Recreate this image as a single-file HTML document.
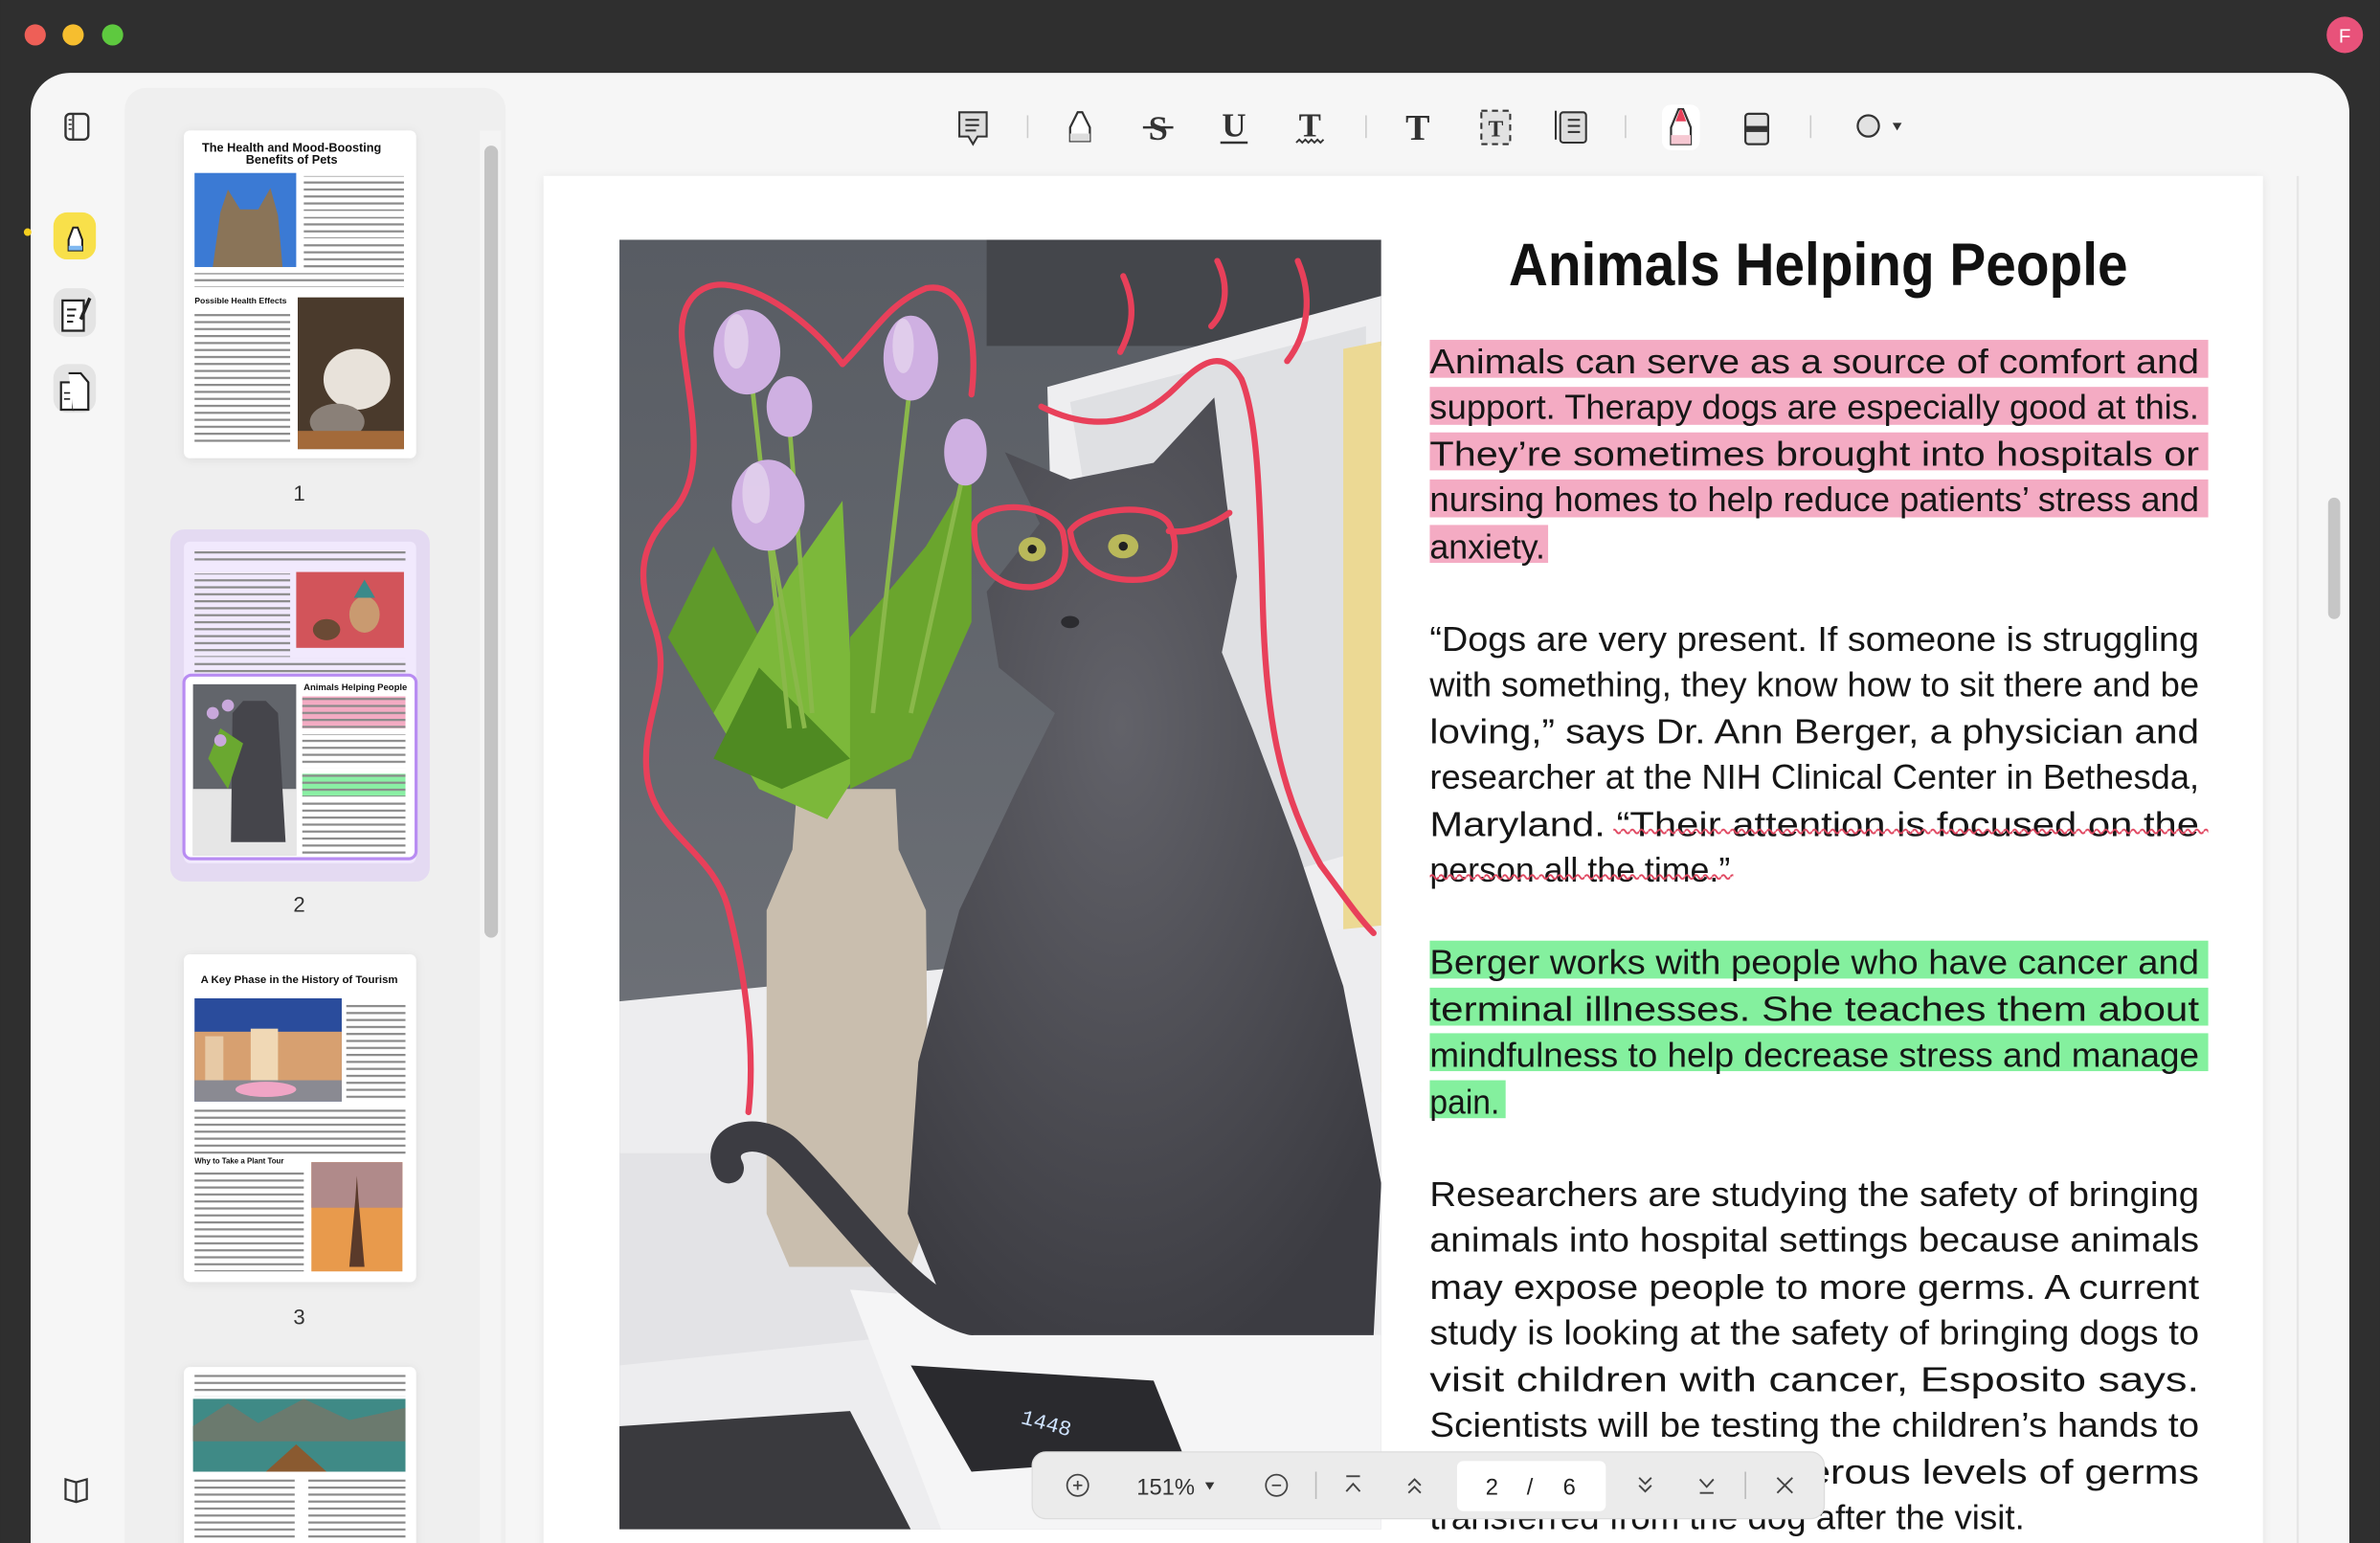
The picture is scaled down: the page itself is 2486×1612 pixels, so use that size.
<!DOCTYPE html>
<html><head><meta charset="utf-8"><style>
html,body{margin:0;padding:0;background:#2f2f2f;}
svg{display:block;font-family:"Liberation Sans",sans-serif;}
</style></head><body>
<svg width="2486" height="1612" viewBox="0 0 1568 1017" xmlns="http://www.w3.org/2000/svg">
<defs>
<pattern id="tl" width="10" height="4.6" patternUnits="userSpaceOnUse"><rect width="10" height="1.4" fill="#8a8a8a"/></pattern>
<pattern id="wv" width="6" height="5" patternUnits="userSpaceOnUse"><path d="M0 3 Q1.5 0.5 3 3 T6 3" fill="none" stroke="#e0435d" stroke-width="1.2"/></pattern>
<linearGradient id="bgg" x1="0" y1="0" x2="0" y2="1"><stop offset="0" stop-color="#585c63"/><stop offset="1" stop-color="#7a7d83"/></linearGradient>
<radialGradient id="catg" cx="0.45" cy="0.35" r="0.7"><stop offset="0" stop-color="#626269"/><stop offset="1" stop-color="#3c3c42"/></radialGradient>
<clipPath id="imc"><rect x="408" y="158" width="502" height="850"/></clipPath>
<filter id="sh" x="-5%" y="-5%" width="110%" height="110%"><feDropShadow dx="0" dy="1" stdDeviation="3" flood-color="#000" flood-opacity="0.08"/></filter>
</defs>

<rect x="0" y="0" width="1568" height="1017" fill="#2f2f2f"/>
<rect x="20" y="48" width="1528" height="1000" rx="26" fill="#f6f6f6"/>
<circle cx="23" cy="23" r="7" fill="#ee5f57"/><circle cx="48" cy="23" r="7" fill="#f6be2f"/><circle cx="74" cy="23" r="7" fill="#5ec93f"/>
<circle cx="1545" cy="23" r="12" fill="#e8527a"/><text x="1545" y="28" font-size="13" fill="#fff" text-anchor="middle">F</text>

<rect x="43" y="75" width="15" height="17" rx="3" fill="none" stroke="#333" stroke-width="1.5"/><line x1="48" y1="75" x2="48" y2="92" stroke="#333" stroke-width="1.3"/><line x1="45" y1="79" x2="47" y2="79" stroke="#333"/><line x1="45" y1="82" x2="47" y2="82" stroke="#333"/><line x1="45" y1="85" x2="47" y2="85" stroke="#333"/>
<circle cx="18" cy="153" r="2.5" fill="#f6cf1f"/>
<rect x="35" y="140" width="28" height="31" rx="9" fill="#f8e04a"/>
<path d="M45 165 L45 158 L48 150 L51 150 L54 158 L54 165 Z" fill="#fff" stroke="#222" stroke-width="1.3"/><path d="M45 162 L54 162 L54 165 L45 165Z" fill="#7fb8f0"/>
<rect x="35" y="190" width="28" height="32" rx="9" fill="#e4e4e4"/>
<path d="M41 198 L55 198 L55 218 L41 218Z" fill="#fff" stroke="#222" stroke-width="1.4"/><line x1="44" y1="204" x2="50" y2="204" stroke="#222" stroke-width="1.3"/><line x1="44" y1="208" x2="49" y2="208" stroke="#222" stroke-width="1.3"/><line x1="44" y1="212" x2="48" y2="212" stroke="#222" stroke-width="1.3"/><path d="M52 210 L58 196 L60 197 L54 211Z" fill="#222"/>
<rect x="35" y="240" width="28" height="32" rx="9" fill="#e4e4e4"/>
<path d="M40 252 L48 252 L48 270 L40 270Z" fill="#fff" stroke="#222" stroke-width="1.4"/><path d="M45 246 L53 246 L58 252 L58 270 L48 270" fill="#fff" stroke="#222" stroke-width="1.4"/><line x1="42" y1="259" x2="46" y2="259" stroke="#222"/><line x1="42" y1="263" x2="46" y2="263" stroke="#222"/>
<path d="M43 975 L50 977 L57 975 L57 988 L50 990 L43 988Z M50 977 L50 990" fill="none" stroke="#333" stroke-width="1.4"/>

<rect x="82" y="58" width="251" height="990" rx="14" fill="#efefef"/>
<rect x="316" y="86" width="14" height="931" fill="#f4f4f4"/>
<rect x="319" y="96" width="9" height="522" rx="4.5" fill="#c4c4c4"/>

<rect x="121" y="86" width="153" height="216" rx="4" fill="#fff" filter="url(#sh)"/>
<text x="192" y="100" font-size="8" font-weight="bold" text-anchor="middle" fill="#111">The Health and Mood-Boosting</text>
<text x="192" y="108" font-size="8" font-weight="bold" text-anchor="middle" fill="#111">Benefits of Pets</text>
<rect x="128" y="114" width="67" height="62" fill="#3b7ad4"/>
<path d="M140 176 L145 140 L150 125 L158 138 L170 138 L178 124 L183 142 L186 176Z" fill="#8a7458"/>
<rect x="200" y="116" width="66" height="23" fill="url(#tl)"/><rect x="200" y="143" width="66" height="14" fill="url(#tl)"/><rect x="200" y="160" width="66" height="18" fill="url(#tl)"/>
<rect x="128" y="180" width="138" height="9" fill="url(#tl)"/>
<text x="128" y="200" font-size="5.5" font-weight="bold" fill="#111">Possible Health Effects</text>
<rect x="128" y="206" width="63" height="88" fill="url(#tl)"/>
<rect x="196" y="196" width="70" height="100" fill="#4a3a2c"/><ellipse cx="235" cy="250" rx="22" ry="20" fill="#e8e2da"/><ellipse cx="222" cy="278" rx="18" ry="12" fill="#8a8078"/><rect x="196" y="284" width="70" height="12" fill="#a36a3a"/>
<text x="197" y="330" font-size="14" text-anchor="middle" fill="#333">1</text>

<rect x="112" y="349" width="171" height="232" rx="9" fill="#e4daf2"/>
<rect x="121" y="357" width="153" height="212" rx="4" fill="#f1e9fd"/>
<rect x="128" y="362" width="139" height="9" fill="url(#tl)"/>
<rect x="128" y="378" width="63" height="55" fill="url(#tl)"/>
<rect x="195" y="377" width="71" height="50" fill="#d2545a"/><ellipse cx="240" cy="405" rx="10" ry="12" fill="#c99a70"/><ellipse cx="215" cy="415" rx="9" ry="7" fill="#6b4a35"/><path d="M233 394 L240 382 L247 394Z" fill="#3a8a8a"/>
<rect x="128" y="434" width="139" height="10" fill="url(#tl)"/>
<rect x="121" y="445" width="153" height="121" rx="5" fill="#fff" stroke="#b88cf2" stroke-width="2"/>
<rect x="127" y="451" width="68" height="113" fill="#62656b"/><rect x="127" y="520" width="68" height="44" fill="#e6e6e6"/><path d="M153 470 L160 462 L175 462 L183 470 L188 555 L152 555Z" fill="#45454b"/><path d="M137 500 L145 480 L160 490 L150 520Z" fill="#6aa830"/><circle cx="140" cy="470" r="4" fill="#c9a8dc"/><circle cx="150" cy="465" r="4" fill="#c9a8dc"/><circle cx="145" cy="488" r="4" fill="#c9a8dc"/>
<text x="234" y="455" font-size="6" font-weight="bold" text-anchor="middle" fill="#111">Animals Helping People</text>
<rect x="199" y="459" width="68" height="21" fill="#f4abc3"/><rect x="199" y="459" width="68" height="21" fill="url(#tl)"/>
<rect x="199" y="484" width="68" height="22" fill="url(#tl)"/>
<rect x="199" y="510" width="68" height="15" fill="#8af0a4"/><rect x="199" y="510" width="68" height="15" fill="url(#tl)"/>
<rect x="199" y="529" width="68" height="35" fill="url(#tl)"/>
<text x="197" y="601" font-size="14" text-anchor="middle" fill="#333">2</text>

<rect x="121" y="629" width="153" height="216" rx="4" fill="#fff" filter="url(#sh)"/>
<text x="197" y="648" font-size="7.2" font-weight="bold" text-anchor="middle" fill="#111">A Key Phase in the History of Tourism</text>
<rect x="128" y="658" width="97" height="68" fill="#2a4c9c"/><rect x="128" y="680" width="97" height="36" fill="#d7a070"/><rect x="135" y="683" width="12" height="30" fill="#e7c9a5"/><rect x="165" y="678" width="18" height="35" fill="#f0d8b5"/><rect x="128" y="712" width="97" height="14" fill="#8a8a92"/><ellipse cx="175" cy="718" rx="20" ry="5" fill="#f0a5c5"/>
<rect x="228" y="660" width="39" height="64" fill="url(#tl)"/>
<rect x="128" y="731" width="139" height="30" fill="url(#tl)"/>
<text x="128" y="767" font-size="5" font-weight="bold" fill="#111">Why to Take a Plant Tour</text>
<rect x="128" y="772" width="72" height="66" fill="url(#tl)"/>
<rect x="205" y="766" width="60" height="72" fill="#e89a4c"/><rect x="205" y="766" width="60" height="30" fill="#b08a8a"/><path d="M230 835 L234 790 L235 775 L236 790 L240 835Z" fill="#5a3a2a"/>
<text x="197" y="873" font-size="14" text-anchor="middle" fill="#333">3</text>

<rect x="121" y="901" width="153" height="130" rx="4" fill="#fff" filter="url(#sh)"/>
<rect x="128" y="906" width="139" height="14" fill="url(#tl)"/>
<rect x="127" y="922" width="140" height="48" fill="#3f8a86"/><path d="M127 940 L150 925 L170 938 L200 922 L230 936 L267 928 L267 950 L127 950Z" fill="#6b7a6e"/><path d="M175 970 L195 952 L215 970Z" fill="#8a5a30"/>
<rect x="128" y="974" width="66" height="40" fill="url(#tl)"/><rect x="203" y="974" width="64" height="40" fill="url(#tl)"/>

<g stroke="#ccc" stroke-width="1"><line x1="677" y1="76" x2="677" y2="91"/><line x1="900" y1="76" x2="900" y2="91"/><line x1="1071" y1="76" x2="1071" y2="91"/><line x1="1193" y1="76" x2="1193" y2="91"/></g>
<path d="M632 74 L650 74 L650 90 L644 90 L641 95 L638 90 L632 90Z" fill="#ddd" stroke="#333" stroke-width="1.3"/><g stroke="#333" stroke-width="1.3"><line x1="636" y1="79" x2="645" y2="79"/><line x1="636" y1="82.5" x2="645" y2="82.5"/><line x1="636" y1="86" x2="643" y2="86"/></g>
<path d="M705 93 L705 84 L710 74 L713 74 L718 84 L718 93Z" fill="#fff" stroke="#333" stroke-width="1.4"/><path d="M705 88 L718 88 L718 93 L705 93Z" fill="#ddd"/>
<text x="763" y="92" font-size="23" font-family="Liberation Serif" font-weight="bold" text-anchor="middle" fill="#333">S</text><line x1="753" y1="84" x2="773" y2="84" stroke="#333" stroke-width="1.6"/>
<text x="813" y="90" font-size="22" font-family="Liberation Serif" font-weight="bold" text-anchor="middle" fill="#333">U</text><line x1="804" y1="94" x2="822" y2="94" stroke="#333" stroke-width="1.6"/>
<text x="863" y="90" font-size="22" font-family="Liberation Serif" font-weight="bold" text-anchor="middle" fill="#333">T</text><path d="M854 94 l2 -2 l2 2 l2 -2 l2 2 l2 -2 l2 2 l2 -2 l2 2 l2 -2" fill="none" stroke="#333" stroke-width="1.2"/>
<text x="934" y="92" font-size="24" font-family="Liberation Serif" font-weight="bold" text-anchor="middle" fill="#333">T</text>
<rect x="976" y="73" width="19" height="22" fill="#e2e2e2" stroke="#333" stroke-width="1.3" stroke-dasharray="4 3"/><text x="985.5" y="90" font-size="15" font-family="Liberation Serif" font-weight="bold" text-anchor="middle" fill="#333">T</text>
<rect x="1028" y="74" width="17" height="20" rx="2" fill="#ddd" stroke="#333" stroke-width="1.3"/><g stroke="#333" stroke-width="1.3"><line x1="1033" y1="79" x2="1041" y2="79"/><line x1="1033" y1="83" x2="1041" y2="83"/><line x1="1033" y1="87" x2="1041" y2="87"/><line x1="1025" y1="73" x2="1025" y2="92"/></g>
<rect x="1095" y="69" width="25" height="30" rx="6" fill="#fff"/>
<path d="M1101 95 L1101 84 L1106 72 L1109 72 L1114 84 L1114 95Z" fill="#fff" stroke="#333" stroke-width="1.4"/><path d="M1104 80 L1107 72 L1108 72 L1111 80Z" fill="#e8405a"/><path d="M1101 89 L1114 89 L1114 95 L1101 95Z" fill="#f6c8d2"/>
<rect x="1150" y="75" width="15" height="20" rx="2" fill="#e2e2e2" stroke="#333" stroke-width="1.4"/><rect x="1150" y="83" width="15" height="4" fill="#333"/>
<circle cx="1231" cy="83" r="7" fill="#e2e2e2" stroke="#333" stroke-width="1.4"/><path d="M1247 81 L1253 81 L1250 86Z" fill="#333"/>

<rect x="358" y="116" width="1133" height="940" fill="#fff" filter="url(#sh)"/>
<line x1="1514" y1="116" x2="1514" y2="1017" stroke="#e6e6e6" stroke-width="1.5"/>
<rect x="1534" y="328" width="8" height="80" rx="4" fill="#c6c6c6"/>

<g clip-path="url(#imc)">
<rect x="408" y="158" width="502" height="850" fill="url(#bgg)"/>
<rect x="650" y="158" width="260" height="70" fill="#44464b"/>
<path d="M690 255 L910 195 L910 650 L750 700 L700 600Z" fill="#eeeef0"/>
<path d="M705 265 L900 215 L900 560 L760 600Z" fill="#dfe0e3"/>
<path d="M885 230 L910 225 L910 720 L885 700Z" fill="#ecd994"/>
<path d="M408 660 L910 610 L910 1008 L408 1008Z" fill="#ededef"/>
<path d="M408 760 L560 760 L600 880 L408 900Z" fill="#e3e3e6"/>
<path d="M408 940 L560 930 L600 1008 L408 1008Z" fill="#3a3a3e"/>
<path d="M560 850 L910 880 L910 1008 L620 1008Z" fill="#f5f5f6"/>
<path d="M600 900 L760 910 L780 960 L640 970Z" fill="#2a2a2e"/>
<text x="672" y="938" font-size="14" fill="#cfe3ff" font-family="Liberation Mono" transform="rotate(15 672 938)">1448</text>
<path d="M525 520 L590 520 L592 560 L610 600 L612 800 L600 835 L520 835 L505 800 L505 600 L522 560Z" fill="#c9beae"/>
<path d="M440 420 L470 360 L500 420 L520 470 L470 470Z" fill="#5f9a2a"/>
<path d="M470 470 L520 380 L555 330 L560 430 L590 470 L545 540 L500 520Z" fill="#7cb83a"/>
<path d="M560 420 L610 360 L640 310 L640 410 L600 500 L560 520Z" fill="#6aa52d"/>
<path d="M500 440 L470 500 L515 520 L560 500Z" fill="#4f8a22"/>
<g stroke="#8ab84a" stroke-width="3" fill="none"><path d="M495 250 L520 480"/><path d="M600 250 L575 470"/><path d="M520 280 L535 470"/><path d="M635 310 L600 470"/><path d="M505 340 L530 480"/></g>
<g fill="#cfb0e2"><ellipse cx="492" cy="232" rx="22" ry="28"/><ellipse cx="520" cy="268" rx="15" ry="20"/><ellipse cx="600" cy="236" rx="18" ry="28"/><ellipse cx="636" cy="298" rx="14" ry="22"/><ellipse cx="506" cy="333" rx="24" ry="30"/></g>
<g fill="#e7d9f0" opacity="0.7"><ellipse cx="485" cy="225" rx="8" ry="18"/><ellipse cx="595" cy="228" rx="7" ry="18"/><ellipse cx="498" cy="325" rx="9" ry="20"/></g>
<path d="M640 870 C600 860 560 800 520 760 C500 740 470 750 480 770" fill="none" stroke="#3c3c42" stroke-width="20" stroke-linecap="round"/>
<path d="M662 298 L685 345 L650 390 L658 440 L695 470 L670 520 L632 600 L605 700 L598 800 L618 850 L640 880 L905 880 L910 780 L885 650 L855 560 L825 480 L805 430 L815 380 L808 330 L800 262 L760 305 L705 316Z" fill="url(#catg)"/>
<ellipse cx="680" cy="362" rx="9" ry="8" fill="#b9b85a"/><ellipse cx="740" cy="360" rx="10" ry="8" fill="#b9b85a"/><circle cx="680" cy="362" r="3" fill="#222"/><circle cx="740" cy="360" r="3" fill="#222"/>
<ellipse cx="705" cy="410" rx="6" ry="4" fill="#2c2c30"/>
<g fill="none" stroke="#e8405a" stroke-width="4" stroke-linecap="round" stroke-linejoin="round">
<path d="M493 733 C498 690 490 640 480 600 C470 560 430 550 426 510 C422 470 445 450 430 410 C420 380 420 360 445 335 C465 310 455 270 450 230 C445 200 460 185 480 188 C510 192 540 220 555 240 C575 220 585 200 610 190 C635 185 645 220 640 260"/>
<path d="M686 268 C720 285 750 280 775 255 C790 240 805 228 818 250 C828 275 830 320 832 400 C834 470 842 520 870 570 C885 590 895 605 905 615"/>
<path d="M642 345 C650 330 690 330 700 350 C705 370 700 385 680 387 C655 388 640 370 642 345Z"/>
<path d="M705 350 C715 335 760 330 770 345 C778 360 775 380 752 382 C725 384 708 372 705 350Z M770 350 C785 352 800 345 810 338"/>
<path d="M740 182 C748 200 747 215 738 232"/>
<path d="M802 172 C810 188 808 205 798 215"/>
<path d="M855 172 C865 195 862 220 848 238"/>
</g>
</g>

<text x="1198" y="188" font-size="40" font-weight="bold" text-anchor="middle" fill="#111" textLength="408" lengthAdjust="spacingAndGlyphs">Animals Helping People</text>

<g fill="#f4abc3"><rect x="942" y="224" width="513" height="25"/><rect x="942" y="255" width="513" height="25"/><rect x="942" y="285" width="513" height="25"/><rect x="942" y="316" width="513" height="25"/><rect x="942" y="346" width="78" height="25"/></g>
<g fill="#84f09e"><rect x="942" y="620" width="513" height="25"/><rect x="942" y="651" width="513" height="25"/><rect x="942" y="681" width="513" height="25"/><rect x="942" y="712" width="50" height="25"/></g>

<g font-size="23" fill="#161616">
<text x="942" y="246" textLength="507" lengthAdjust="spacingAndGlyphs">Animals can serve as a source of comfort and</text>
<text x="942" y="276" textLength="507" lengthAdjust="spacingAndGlyphs">support. Therapy dogs are especially good at this.</text>
<text x="942" y="307" textLength="507" lengthAdjust="spacingAndGlyphs">They’re sometimes brought into hospitals or</text>
<text x="942" y="337" textLength="507" lengthAdjust="spacingAndGlyphs">nursing homes to help reduce patients’ stress and</text>
<text x="942" y="368" textLength="76" lengthAdjust="spacingAndGlyphs">anxiety.</text>

<text x="942" y="429" textLength="507" lengthAdjust="spacingAndGlyphs">“Dogs are very present. If someone is struggling</text>
<text x="942" y="459" textLength="507" lengthAdjust="spacingAndGlyphs">with something, they know how to sit there and be</text>
<text x="942" y="490" textLength="507" lengthAdjust="spacingAndGlyphs">loving,” says Dr. Ann Berger, a physician and</text>
<text x="942" y="520" textLength="507" lengthAdjust="spacingAndGlyphs">researcher at the NIH Clinical Center in Bethesda,</text>
<text x="942" y="551" textLength="507" lengthAdjust="spacingAndGlyphs">Maryland. “Their attention is focused on the</text>
<text x="942" y="581" textLength="198" lengthAdjust="spacingAndGlyphs">person all the time.”</text>

<text x="942" y="642" textLength="507" lengthAdjust="spacingAndGlyphs">Berger works with people who have cancer and</text>
<text x="942" y="673" textLength="507" lengthAdjust="spacingAndGlyphs">terminal illnesses. She teaches them about</text>
<text x="942" y="703" textLength="507" lengthAdjust="spacingAndGlyphs">mindfulness to help decrease stress and manage</text>
<text x="942" y="734" textLength="46" lengthAdjust="spacingAndGlyphs">pain.</text>

<text x="942" y="795" textLength="507" lengthAdjust="spacingAndGlyphs">Researchers are studying the safety of bringing</text>
<text x="942" y="825" textLength="507" lengthAdjust="spacingAndGlyphs">animals into hospital settings because animals</text>
<text x="942" y="856" textLength="507" lengthAdjust="spacingAndGlyphs">may expose people to more germs. A current</text>
<text x="942" y="886" textLength="507" lengthAdjust="spacingAndGlyphs">study is looking at the safety of bringing dogs to</text>
<text x="942" y="917" textLength="507" lengthAdjust="spacingAndGlyphs">visit children with cancer, Esposito says.</text>
<text x="942" y="947" textLength="507" lengthAdjust="spacingAndGlyphs">Scientists will be testing the children’s hands to</text>
<text x="942" y="978" textLength="507" lengthAdjust="spacingAndGlyphs">see if there are dangerous levels of germs</text>
<text x="942" y="1008" textLength="392" lengthAdjust="spacingAndGlyphs">transferred from the dog after the visit.</text>
</g>
<rect x="1063" y="545" width="392" height="6" fill="url(#wv)"/>
<rect x="942" y="575" width="200" height="6" fill="url(#wv)"/>

<rect x="680" y="957" width="522" height="44" rx="9" fill="#ebebeb" stroke="#dcdcdc" stroke-width="0.8"/>
<g fill="none" stroke="#444" stroke-width="1.1"><circle cx="710" cy="979" r="7"/><line x1="707" y1="979" x2="713" y2="979"/><line x1="710" y1="976" x2="710" y2="982"/><circle cx="841" cy="979" r="7"/><line x1="838" y1="979" x2="844" y2="979"/></g>
<text x="768" y="985" font-size="15" text-anchor="middle" fill="#333">151%</text><path d="M794 977 L800 977 L797 982Z" fill="#333"/>
<line x1="867" y1="970" x2="867" y2="988" stroke="#bbb"/><line x1="1150" y1="970" x2="1150" y2="988" stroke="#bbb"/>
<g fill="none" stroke="#444" stroke-width="1.2"><line x1="887" y1="973" x2="896" y2="973"/><path d="M887 983 L891.5 978 L896 983"/><path d="M928 979 L932 975 L936 979 M928 984 L932 980 L936 984"/><path d="M1080 974 L1084 978 L1088 974 M1080 979 L1084 983 L1088 979"/><path d="M1120 975 L1124.5 980 L1129 975"/><line x1="1120" y1="984" x2="1129" y2="984"/><path d="M1171 974 L1181 984 M1181 974 L1171 984"/></g>
<rect x="960" y="963" width="98" height="33" rx="4" fill="#fff"/>
<text x="983" y="985" font-size="15" text-anchor="middle" fill="#222">2</text><text x="1008" y="985" font-size="15" text-anchor="middle" fill="#222">/</text><text x="1034" y="985" font-size="15" text-anchor="middle" fill="#222">6</text>
</svg>
</body></html>
